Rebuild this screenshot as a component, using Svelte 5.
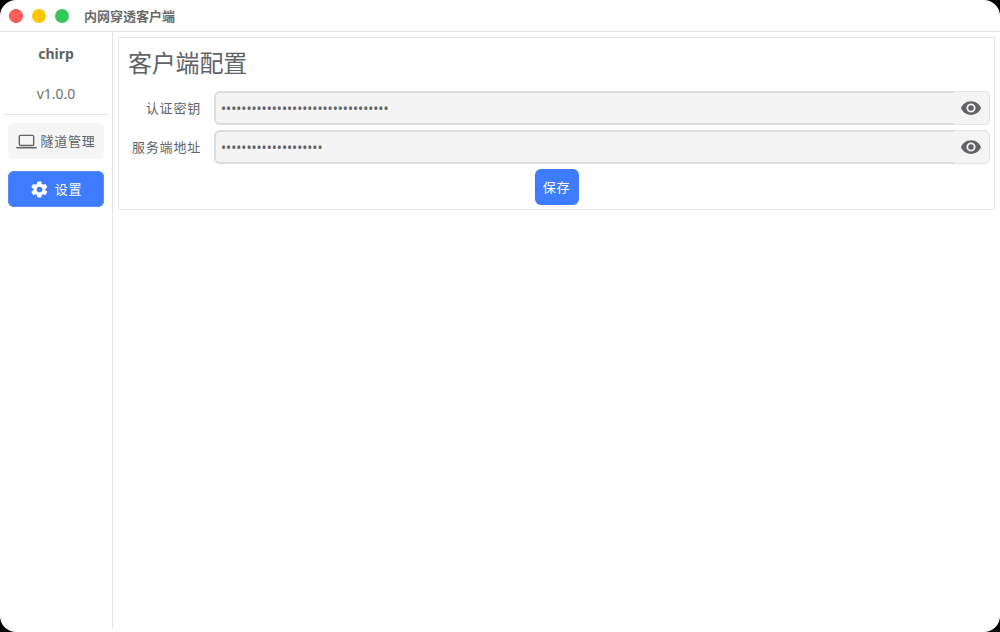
<script lang="ts">
  let { authKey = 'abcdefghijklmnopqrstuvwxyz0123456', serverAddr = 'example.com:7000.abc' }: { authKey?: string; serverAddr?: string } = $props()

  const fields = [
    { label: '认证密钥', value: authKey },
    { label: '服务端地址', value: serverAddr }
  ]
</script>

<div class="window">
  <header class="titlebar">
    <span class="light red"></span>
    <span class="light yellow"></span>
    <span class="light green"></span>
    <span class="title">内网穿透客户端</span>
  </header>

  <div class="body">
    <aside class="sidebar">
      <div class="brand">chirp</div>
      <div class="version">v1.0.0</div>
      <hr />
      <button class="nav">
        <svg width="21" height="21" viewBox="0 0 24 24" fill="none" stroke="currentColor" stroke-width="1.6">
          <rect x="3.8" y="5" width="16.4" height="11.6" rx="1.4" />
          <path d="M1 19.2h22" stroke-width="1.8" stroke-linecap="round" />
        </svg>
        <span>隧道管理</span>
      </button>
      <button class="nav active">
        <svg width="19" height="19" viewBox="0 0 24 24" fill="currentColor">
          <path d="M19.4 13c.04-.32.06-.66.06-1s-.02-.68-.07-1l2.16-1.68a.5.5 0 0 0 .12-.65l-2.05-3.54a.5.5 0 0 0-.62-.22l-2.55 1.02a7.6 7.6 0 0 0-1.73-1L14.34 2.2a.5.5 0 0 0-.5-.42H9.76a.5.5 0 0 0-.5.42l-.38 2.71c-.62.26-1.2.6-1.73 1L4.6 4.9a.5.5 0 0 0-.62.22L1.93 8.67a.5.5 0 0 0 .12.65L4.2 11a7.9 7.9 0 0 0 0 2l-2.15 1.68a.5.5 0 0 0-.12.65l2.05 3.54c.13.22.39.31.62.22l2.55-1.02c.53.4 1.11.74 1.73 1l.38 2.71c.04.24.25.42.5.42h4.08c.25 0 .46-.18.5-.42l.38-2.71c.62-.26 1.2-.6 1.73-1l2.55 1.02c.23.09.49 0 .62-.22l2.05-3.54a.5.5 0 0 0-.12-.65L19.4 13zM12 15.6a3.6 3.6 0 1 1 0-7.2 3.6 3.6 0 0 1 0 7.2z" />
        </svg>
        <span>设置</span>
      </button>
    </aside>

    <main class="main">
      <section class="card">
        <h1>客户端配置</h1>
        {#each fields as field}
          <div class="row">
            <label for={field.label}>{field.label}</label>
            <div class="input-wrap">
              <input id={field.label} type="password" value={field.value} />
              <button class="eye" aria-label="显示">
                <svg width="22" height="22" viewBox="0 0 24 24" fill="currentColor">
                  <path d="M12 4.5C7 4.5 2.73 7.61 1 12c1.73 4.39 6 7.5 11 7.5s9.27-3.11 11-7.5c-1.73-4.39-6-7.5-11-7.5zM12 17a5 5 0 1 1 0-10 5 5 0 0 1 0 10zm0-8a3 3 0 1 0 0 6 3 3 0 0 0 0-6z" />
                </svg>
              </button>
            </div>
          </div>
        {/each}
        <div class="actions">
          <button class="save">保存</button>
        </div>
      </section>
    </main>
  </div>
</div>

<style>
  :global(body) {
    background: #000;
    margin: 0;
  }

  .window {
    width: 1000px;
    height: 632px;
    background: #fff;
    border-radius: 16px;
    overflow: hidden;
    color: #606266;
    font-family: "Noto Sans", "Noto Sans CJK SC", sans-serif;
    display: flex;
    flex-direction: column;
  }

  .titlebar {
    height: 31px;
    flex-shrink: 0;
    border-bottom: 1px solid #e4e4e4;
    display: flex;
    align-items: center;
    padding-left: 9px;
    gap: 9px;
  }

  .light {
    width: 14px;
    height: 14px;
    border-radius: 50%;
    box-sizing: border-box;
  }
  .red { background: #ff5f57; border: 1px solid #f0484f; }
  .yellow { background: #ffc600; }
  .green { background: #35c759; }

  .title {
    margin-left: 6px;
    font-size: 13px;
    font-weight: 700;
    color: #6a6a6a;
    padding-bottom: 1px;
  }

  .body {
    flex: 1;
    display: flex;
    min-height: 0;
    padding-bottom: 4px;
  }

  .sidebar {
    width: 112px;
    flex-shrink: 0;
    border-right: 1px solid #e4e4e4;
    display: flex;
    flex-direction: column;
    align-items: center;
  }

  .brand {
    margin-top: 12px;
    font-size: 14px;
    font-weight: 700;
    line-height: 20px;
  }

  .version {
    margin-top: 20px;
    font-size: 14px;
    line-height: 20px;
    color: #707070;
  }

  hr {
    width: 104px;
    margin: 10px 0 8px;
    border: 0;
    border-top: 1px solid #e4e4e4;
  }

  .nav {
    width: 96px;
    height: 36px;
    margin-bottom: 12px;
    padding: 0;
    display: flex;
    align-items: center;
    justify-content: center;
    gap: 3px;
    border: 0;
    border-radius: 6px;
    background: #f5f5f5;
    color: #606266;
    font: inherit;
    font-size: 13px;
    letter-spacing: 0.8px;
  }

  .nav span {
    padding-bottom: 2px;
  }

  .nav.active {
    background: #3f7bff;
    color: #fff;
    gap: 6px;
    box-shadow: inset 0 0 0 1px #5b8dff;
  }

  .main {
    flex: 1;
    padding: 5px 5px 0 5px;
    min-width: 0;
  }

  .card {
    border: 1px solid #e8e8e8;
    height: 173px;
    box-sizing: border-box;
  }

  h1 {
    margin: 8px 0 11px 9px;
    font-size: 24px;
    font-weight: 400;
    line-height: 34px;
    letter-spacing: -0.2px;
  }

  .row {
    display: flex;
    align-items: center;
    margin-bottom: 5px;
    padding-right: 4px;
  }

  label {
    width: 82px;
    text-align: right;
    margin-right: 13px;
    padding-bottom: 2px;
    font-size: 13px;
    letter-spacing: 0.8px;
    flex-shrink: 0;
  }

  .input-wrap {
    flex: 1;
    display: flex;
    height: 34px;
    min-width: 0;
  }

  input {
    flex: 1;
    min-width: 0;
    box-sizing: border-box;
    height: 34px;
    background: #f4f4f4;
    border: 2px solid #dcdcdc;
    border-right: 0;
    border-radius: 6px 0 0 6px;
    padding: 1px 5px 0;
    font: inherit;
    font-size: 13.5px;
    color: #606266;
    outline: none;
  }

  .eye {
    width: 36px;
    height: 34px;
    margin-left: -1px;
    padding: 0 2px 0 0;
    display: flex;
    align-items: center;
    justify-content: center;
    background: #f4f4f4;
    border: 1px solid #e4e4e4;
    border-left: 0;
    border-radius: 0 6px 6px 0;
    color: #606266;
  }

  .actions {
    display: flex;
    justify-content: center;
  }

  .save {
    width: 44px;
    height: 36px;
    padding: 0 0 2px;
    border: 0;
    border-radius: 6px;
    background: #3f7bff;
    color: #fff;
    font: inherit;
    font-size: 13px;
    letter-spacing: 0.7px;
  }
</style>
